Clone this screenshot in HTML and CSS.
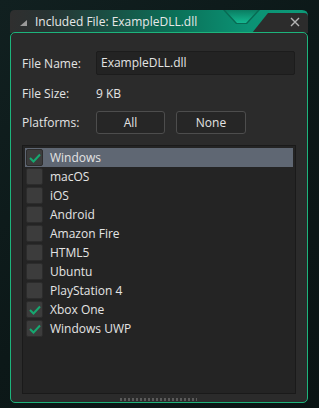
FILE: index.html
```html
<!DOCTYPE html>
<html>
<head>
<meta charset="utf-8">
<link rel="stylesheet" href="styles.css">
</head>
<body>
<div class="window">
  <div class="titlebar">
    <svg class="title-bg" width="298" height="23" viewBox="0 0 298 23">
      <defs>
        <linearGradient id="tg" x1="0" y1="0" x2="1" y2="0">
          <stop offset="0" stop-color="#2f2f2f"/>
          <stop offset="0.12" stop-color="#283232"/>
          <stop offset="0.55" stop-color="#0b7058"/>
          <stop offset="0.8" stop-color="#0b9274"/>
          <stop offset="1" stop-color="#0c9a78"/>
        </linearGradient>
        <linearGradient id="ng" x1="0" y1="0" x2="0" y2="1">
          <stop offset="0" stop-color="#0a7c61"/>
          <stop offset="1" stop-color="#14b890"/>
        </linearGradient>
      </defs>
      <path d="M0 23 V5 Q0 0 5 0 H292 Q298 0 298 6 V23 Z" fill="url(#tg)"/>
      <polygon points="213,0 250,0 237,14 226,14" fill="#086a53"/>
      <polygon points="215,0 248,0 236,13 227,13" fill="url(#ng)"/>
      <path d="M258 3 H294 Q298 3 298 7 V23 H242 Z" fill="#2c2c2c"/>
    </svg>
    <svg class="collapse" width="7" height="6" viewBox="0 0 7 6"><polygon points="0,6 7,0 7,6" fill="#9a9a9a"/></svg>
    <span class="title">Included File: ExampleDLL.dll</span>
    <svg class="close" width="10" height="10" viewBox="0 0 10 10"><path d="M1 1 L9 9 M9 1 L1 9" stroke="#b4b4b4" stroke-width="1.4"/></svg>
  </div>
  <div class="panel">
    <div class="row">
      <span class="label">File Name:</span>
      <div class="input">ExampleDLL.dll</div>
    </div>
    <div class="row row-size">
      <span class="label">File Size:</span>
      <span class="value">9 KB</span>
    </div>
    <div class="row row-plat">
      <span class="label">Platforms:</span>
      <div class="buttons">
        <div class="btn">All</div>
        <div class="btn btn-none">None</div>
      </div>
    </div>
    <div class="list">
      <div class="item selected"><span class="cb on"><svg width="12" height="10" viewBox="0 0 12 10"><path d="M1 5 L4.5 8.5 L11 1.5" fill="none" stroke="#16a870" stroke-width="2"/></svg></span>Windows</div>
      <div class="item"><span class="cb"></span>macOS</div>
      <div class="item"><span class="cb"></span>iOS</div>
      <div class="item"><span class="cb"></span>Android</div>
      <div class="item"><span class="cb"></span>Amazon Fire</div>
      <div class="item"><span class="cb"></span>HTML5</div>
      <div class="item"><span class="cb"></span>Ubuntu</div>
      <div class="item"><span class="cb"></span>PlayStation 4</div>
      <div class="item"><span class="cb on"><svg width="12" height="10" viewBox="0 0 12 10"><path d="M1 5 L4.5 8.5 L11 1.5" fill="none" stroke="#16a870" stroke-width="2"/></svg></span>Xbox One</div>
      <div class="item"><span class="cb on"><svg width="12" height="10" viewBox="0 0 12 10"><path d="M1 5 L4.5 8.5 L11 1.5" fill="none" stroke="#16a870" stroke-width="2"/></svg></span>Windows UWP</div>
    </div>
    <div class="grip"></div>
  </div>
</div>
</body>
</html>
```
FILE: styles.css
```css
html, body {
  margin: 0;
  padding: 0;
}
body {
  width: 319px;
  height: 408px;
  overflow: hidden;
  background: linear-gradient(135deg, #112020 0%, #0c1818 50%, #0a1414 100%);
  font-family: "Open Sans", "Noto Sans", sans-serif;
  font-size: 12px;
  color: #e4e4e4;
}
.window {
  margin: 10px 0 0 10px;
  width: 298px;
}
.titlebar {
  position: relative;
  height: 23px;
  display: flex;
  align-items: center;
}
.title-bg {
  position: absolute;
  left: 0;
  top: 0;
}
.collapse {
  position: relative;
  margin-left: 10px;
  margin-top: 3px;
}
.title {
  position: relative;
  margin-left: 8px;
  font-size: 12px;
  color: #e8e8e8;
  margin-top: -1px;
}
.close {
  position: relative;
  margin-left: auto;
  margin-right: 8px;
  margin-top: 0;
}
.panel {
  position: relative;
  box-sizing: border-box;
  margin-top: -1px;
  height: 371px;
  border: 1px solid #1db47c;
  border-radius: 5px;
  background: #2b2b2b;
  padding: 18px 11px 0 11px;
}
.row {
  display: flex;
  align-items: center;
  height: 24px;
}
.label {
  width: 74px;
  flex: none;
}
.input {
  box-sizing: border-box;
  width: 199px;
  height: 24px;
  background: #232323;
  border: 1px solid #1c1c1c;
  border-radius: 2px;
  padding-left: 4px;
  line-height: 22px;
}
.row-size {
  margin-top: 6px;
}
.row-plat {
  margin-top: 6px;
  height: 23px;
}
.buttons {
  display: flex;
  gap: 11px;
}
.btn {
  box-sizing: border-box;
  width: 69px;
  height: 23px;
  border: 1px solid #4d4d4d;
  border-radius: 3px;
  background: #262626;
  text-align: center;
  line-height: 21px;
}
.btn-none {
  width: 70px;
}
.list {
  box-sizing: border-box;
  margin-top: 11px;
  width: 274px;
  height: 249px;
  background: #242424;
  border: 1px solid #1a1a1a;
  padding: 2px;
}
.item {
  display: flex;
  align-items: center;
  height: 19px;
}
.item.selected {
  background: #5f6773;
}
.cb {
  box-sizing: border-box;
  width: 17px;
  height: 17px;
  margin-left: 1px;
  margin-right: 7px;
  background: #3c3c3c;
  border: 1px solid #2c2c2c;
  border-radius: 2px;
  display: flex;
  align-items: center;
  justify-content: center;
}
.grip {
  position: absolute;
  left: 109px;
  bottom: 1px;
  width: 77px;
  height: 3px;
  background-image: repeating-linear-gradient(90deg, #5a5a5a 0 2px, transparent 2px 4px);
}
```
